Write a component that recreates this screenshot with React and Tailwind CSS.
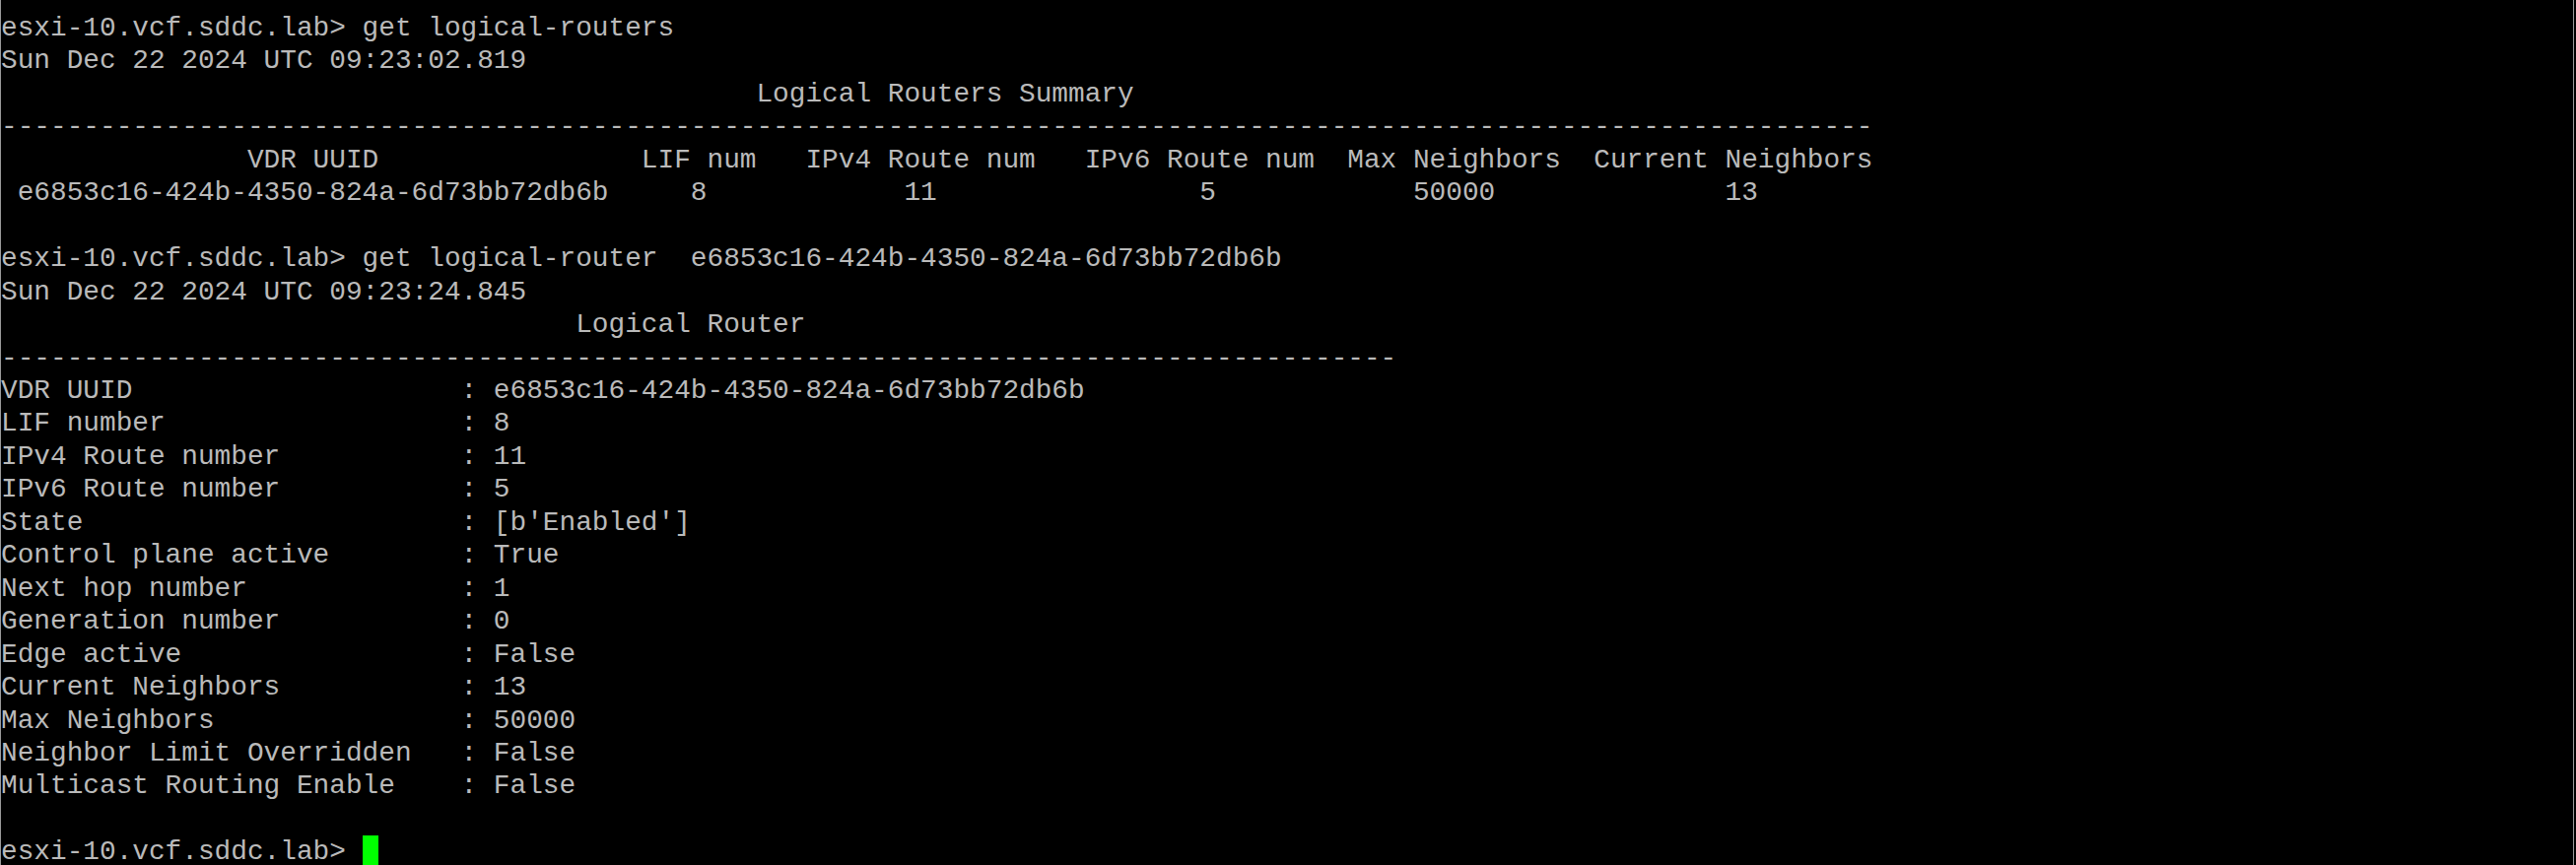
const pad = (s, n) => s + " ".repeat(Math.max(0, n - s.length));

const uuid = "e6853c16-424b-4350-824a-6d73bb72db6b";
const prompt = "esxi-10.vcf.sddc.lab> ";

const details = [
  ["VDR UUID", uuid],
  ["LIF number", "8"],
  ["IPv4 Route number", "11"],
  ["IPv6 Route number", "5"],
  ["State", "[b'Enabled']"],
  ["Control plane active", "True"],
  ["Next hop number", "1"],
  ["Generation number", "0"],
  ["Edge active", "False"],
  ["Current Neighbors", "13"],
  ["Max Neighbors", "50000"],
  ["Neighbor Limit Overridden", "False"],
  ["Multicast Routing Enable", "False"],
];

// place text at fixed columns, like the router's fixed-width table output
const cols = (items) => {
  let line = "";
  items.forEach(([col, text]) => {
    line = pad(line, col) + text;
  });
  return line;
};

const lines = [
  prompt + "get logical-routers",
  "Sun Dec 22 2024 UTC 09:23:02.819",
  cols([[46, "Logical Routers Summary"]]),
  "-".repeat(114),
  cols([
    [15, "VDR UUID"],
    [39, "LIF num"],
    [49, "IPv4 Route num"],
    [66, "IPv6 Route num"],
    [82, "Max Neighbors"],
    [97, "Current Neighbors"],
  ]),
  cols([
    [1, uuid],
    [42, "8"],
    [55, "11"],
    [73, "5"],
    [86, "50000"],
    [105, "13"],
  ]),
  "",
  prompt + "get logical-router  " + uuid,
  "Sun Dec 22 2024 UTC 09:23:24.845",
  cols([[35, "Logical Router"]]),
  "-".repeat(85),
  ...details.map(([k, v]) => pad(k, 28) + ": " + v),
  "",
];

export default function App() {
  return (
    <div className="w-[2614px] h-[878px] bg-black overflow-hidden">
      <div className="w-[2612px] h-[878px] border-l border-r border-[#9a9a9a] pt-[12px]">
        <pre
          className="m-0 text-[27.78px] leading-[33.45px] text-[#bababa] whitespace-pre"
          style={{ fontFamily: '"Liberation Mono", "Courier New", monospace' }}
        >
          {lines.join("\n") + "\n"}
          {prompt}
          <span className="inline-block w-[16.67px] h-[33.45px] align-top bg-[#00ff00]"></span>
        </pre>
      </div>
    </div>
  );
}
